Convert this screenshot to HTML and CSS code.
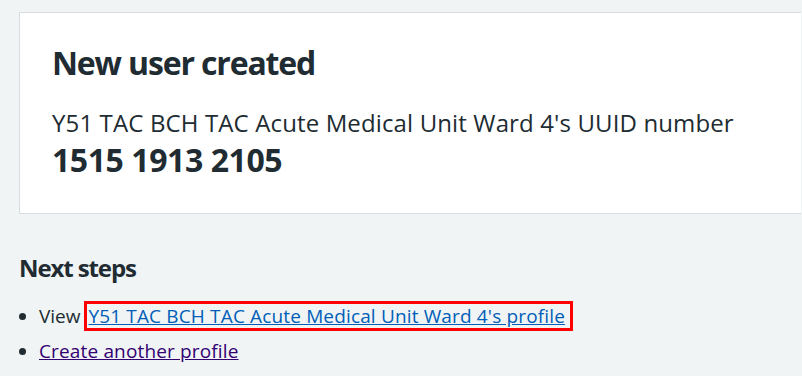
FILE: index.html
```html
<!DOCTYPE html>
<html lang="en">
<head>
<meta charset="utf-8">
<title>New user created</title>
<link rel="stylesheet" href="styles.css">
</head>
<body>
<main class="page">
  <section class="panel">
    <h1 class="panel-title">New user created</h1>
    <div class="panel-body">
      <p class="panel-text">Y51 TAC BCH TAC Acute Medical Unit Ward 4's UUID number</p>
      <p class="panel-number">1515 1913 2105</p>
    </div>
  </section>
  <h2 class="steps-title">Next steps</h2>
  <ul class="steps">
    <li class="step">View <span class="highlight"><a class="link" href="#profile">Y51 TAC BCH TAC Acute Medical Unit Ward 4's profile</a></span></li>
    <li class="step"><a class="link link-visited" href="#create">Create another profile</a></li>
  </ul>
</main>
</body>
</html>
```
FILE: styles.css
```css
html, body {
  margin: 0;
  padding: 0;
}
body {
  background: #f0f4f5;
  color: #212b32;
  font-family: "Open Sans", "Noto Sans", sans-serif;
  width: 802px;
  height: 376px;
  overflow: hidden;
}
.page {
  padding: 12px 0 0 19px;
}
.panel {
  background: #ffffff;
  border: 1px solid #d8dde0;
  border-right: none;
  width: 749px;
  padding: 30px 0 33px 32px;
}
.panel-title {
  margin: 0 0 24px;
  font-size: 32px;
  line-height: 40px;
  font-weight: 700;
  letter-spacing: -1.15px;
}
.panel-text {
  margin: 0 0 1px;
  font-size: 24px;
  line-height: 32px;
  letter-spacing: 0.13px;
}
.panel-number {
  margin: 0;
  font-size: 32px;
  line-height: 40px;
  font-weight: 700;
  letter-spacing: -0.43px;
}
.steps-title {
  margin: 38px 0 18px;
  font-size: 24px;
  line-height: 32px;
  font-weight: 700;
  letter-spacing: -1.1px;
}
.steps {
  margin: 0;
  padding-left: 20px;
  list-style: disc;
}
.step {
  font-size: 19px;
  line-height: 28px;
  margin-bottom: 7px;
}
.step .link {
  letter-spacing: 0.15px;
}
.highlight {
  display: inline-block;
  line-height: 24px;
  margin: -1px 0 -1px -1px;
  border: 3px solid #ff0000;
  padding: 0 5px 0 1px;
}
.link {
  color: #005eb8;
  text-decoration: underline;
}
.link-visited {
  color: #330072;
}
```
